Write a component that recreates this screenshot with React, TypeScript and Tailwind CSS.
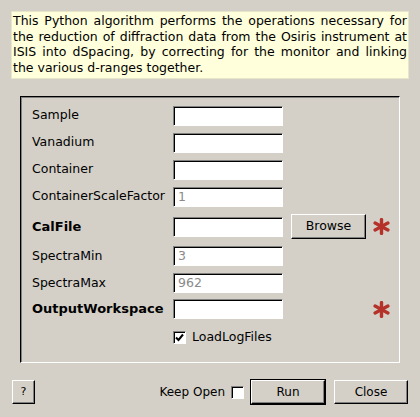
import React from 'react';

// Classic Qt "algorithm dialog" look
const sunken =
  'bg-white border border-t-[#808080] border-l-[#808080] border-r-white border-b-white shadow-[inset_1px_1px_0_0_#000]';
const raised =
  'bg-[#d4d0c8] border border-t-white border-l-white border-r-black border-b-black shadow-[inset_-1px_-1px_0_0_#808080]';

type Row = {
  label: string;
  h: string;
  bold?: boolean;
  value?: string;
  browse?: boolean;
  required?: boolean;
};

const rows: Row[] = [
  { label: 'Sample', h: 'h-[27px]' },
  { label: 'Vanadium', h: 'h-[27px]' },
  { label: 'Container', h: 'h-[27px]' },
  { label: 'ContainerScaleFactor', h: 'h-[27px]', value: '1' },
  { label: 'CalFile', h: 'h-[33px]', bold: true, browse: true, required: true },
  { label: 'SpectraMin', h: 'h-[26px]', value: '3' },
  { label: 'SpectraMax', h: 'h-[28px]', value: '962' },
  { label: 'OutputWorkspace', h: 'h-[24px]', bold: true, required: true },
];

const Star = () => (
  <svg width="17" height="17" viewBox="0 0 16 16" className="ml-[7px]">
    <g stroke="#b5322a" strokeWidth="3.2" strokeLinecap="round">
      <line x1="8" y1="1.5" x2="8" y2="14.5" />
      <line x1="2" y1="4.8" x2="14" y2="11.2" />
      <line x1="2" y1="11.2" x2="14" y2="4.8" />
    </g>
  </svg>
);

const Check = ({ checked }: { checked?: boolean }) => (
  <div className={`w-[13px] h-[13px] ${sunken} flex items-center justify-center`}>
    {checked && (
      <svg width="9" height="9" viewBox="0 0 9 9">
        <path d="M1 4.5 L3.5 7 L8 1.5" fill="none" stroke="#000" strokeWidth="2" />
      </svg>
    )}
  </div>
);

export default function App() {
  return (
    <div
      className="w-[420px] h-[417px] bg-[#d4d0c8] text-[12px] text-black pt-[11px] overflow-hidden"
      style={{ fontFamily: '"DejaVu Sans", Verdana, sans-serif' }}
    >
      <div className="mx-[11px] h-[68px] bg-[#ffffdc] border border-[#e6e6c8] px-[1px] pt-[1px] leading-[15.5px] text-[12.5px] text-justify">
        This Python algorithm performs the operations necessary for the reduction of diffraction data
        from the Osiris instrument at ISIS into dSpacing, by correcting for the monitor and linking the
        various d-ranges together.
      </div>

      <div className="ml-[20px] mt-[17px] w-[380px] h-[267px] border border-t-black border-l-black border-r-white border-b-white shadow-[inset_1px_1px_0_0_#808080] pt-[5px] pl-[11px]">
        {rows.map((r) => (
          <div key={r.label} className={`flex items-center ${r.h}`}>
            <div className={`w-[141px] ${r.bold ? 'font-bold text-[13px]' : 'text-[12.5px]'}`}>{r.label}</div>
            <div className={`w-[110px] h-[20px] ${sunken} px-[4px] leading-[18px] text-[12.5px] text-[#8a8a8a]`}>
              {r.value}
            </div>
            {r.browse && (
              <div className={`ml-[8px] w-[75px] h-[25px] ${raised} flex items-center justify-center text-[12.5px]`}>
                Browse
              </div>
            )}
            {r.required && !r.browse && <div className="w-[83px]" />}
            {r.required && <Star />}
          </div>
        ))}
        <div className="flex items-center h-[32px] pl-[141px]">
          <Check checked />
          <span className="ml-[6px] text-[12.5px]">LoadLogFiles</span>
        </div>
      </div>

      <div className="flex items-center mt-[16px] px-[12px]">
        <div className={`w-[23px] h-[24px] ${raised} flex items-center justify-center text-[11px]`}>?</div>
        <div className="flex-1" />
        <span>Keep Open</span>
        <div className="ml-[6px]">
          <Check />
        </div>
        <div className="ml-[6px] border border-black">
          <div className={`w-[74px] h-[24px] ${raised} flex items-center justify-center`}>Run</div>
        </div>
        <div className={`ml-[8px] w-[74px] h-[24px] ${raised} flex items-center justify-center`}>Close</div>
      </div>
    </div>
  );
}
